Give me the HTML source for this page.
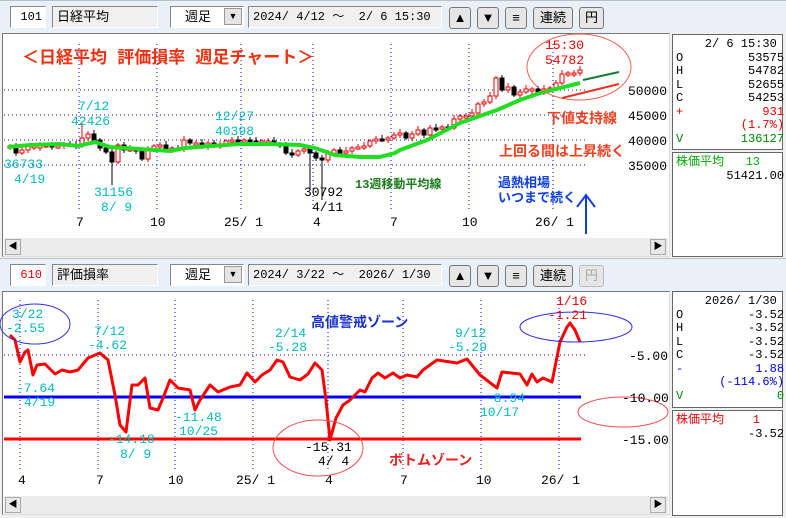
<!DOCTYPE html>
<html><head><meta charset="utf-8">
<style>
*{margin:0;padding:0;box-sizing:border-box}
body{width:786px;height:518px;background:#f0f0f0;position:relative;overflow:hidden;font-family:"Liberation Mono","Noto Sans CJK JP",monospace;font-size:13px}
.tb{position:absolute;left:0;width:786px;height:33px;background:#eaf0f8;border-top:1px solid #b8c0cc}
.box{position:absolute;top:6px;height:22px;background:#f0f0f0;border:1px solid #888;border-right-color:#fff;border-bottom-color:#fff;line-height:20px;padding-left:4px;white-space:pre;font-size:12px}
.btn{position:absolute;top:7px;height:22px;background:#e6e6e6;border:1px solid #777;border-radius:3px;text-align:center;line-height:20px;font-family:"Liberation Sans","Noto Sans CJK JP",sans-serif;font-size:13px}
.panel{position:absolute;background:#fff;border:1px solid #777;border-right-color:#ddd;border-bottom-color:#ddd}
.info{position:absolute;background:#fff;border:1px solid #666;font-size:12px;line-height:13.5px;white-space:pre}
.sb{position:absolute;height:18px;background:#ececec}
.arr{position:absolute;width:16px;height:16px;background:#e8e8e8;border:1px solid #aaa;font-size:9px;text-align:center;line-height:14px}
svg text{font-family:"Liberation Mono","Noto Sans CJK JP",monospace}
</style></head><body>

<div class="tb" style="top:0"></div>
<div class="box" style="left:10px;width:36px;background:#fff;text-align:right;padding-right:3px">101</div>
<div class="box" style="left:52px;width:106px;font-family:'Liberation Sans','Noto Sans CJK JP',sans-serif;font-size:13px">日経平均</div>
<div class="box" style="left:170px;width:74px;background:#fff;font-family:'Liberation Sans','Noto Sans CJK JP',sans-serif;padding-left:14px;font-size:13px">週足<span style="position:absolute;right:1px;top:1px;width:18px;height:17px;background:#e4e4e4;border:1px solid #999;font-size:9px;text-align:center;line-height:15px">▼</span></div>
<div class="box" style="left:248px;width:194px">2024/ 4/12 ～  2/ 6 15:30</div>
<div class="btn" style="left:449px;width:22px">▲</div>
<div class="btn" style="left:477px;width:22px">▼</div>
<div class="btn" style="left:505px;width:22px">≡</div>
<div class="btn" style="left:533px;width:40px">連続</div>
<div class="btn" style="left:579px;width:25px">円</div>

<div class="tb" style="top:258px"></div>
<div class="box" style="top:264px;left:10px;width:36px;background:#fff;text-align:right;padding-right:3px;color:#e00">610</div>
<div class="box" style="top:264px;left:52px;width:106px;font-family:'Liberation Sans','Noto Sans CJK JP',sans-serif;font-size:13px">評価損率</div>
<div class="box" style="top:264px;left:170px;width:74px;background:#fff;font-family:'Liberation Sans','Noto Sans CJK JP',sans-serif;padding-left:14px;font-size:13px">週足<span style="position:absolute;right:1px;top:1px;width:18px;height:17px;background:#e4e4e4;border:1px solid #999;font-size:9px;text-align:center;line-height:15px">▼</span></div>
<div class="box" style="top:264px;left:248px;width:194px">2024/ 3/22 ～  2026/ 1/30</div>
<div class="btn" style="top:265px;left:449px;width:22px">▲</div>
<div class="btn" style="top:265px;left:477px;width:22px">▼</div>
<div class="btn" style="top:265px;left:505px;width:22px">≡</div>
<div class="btn" style="top:265px;left:533px;width:40px">連続</div>
<div class="btn" style="top:265px;left:579px;width:25px;color:#aaa;border-color:#bbb">円</div>

<div class="panel" style="left:2px;top:33px;width:668px;height:224px"></div>
<div class="sb" style="left:4px;top:238px;width:664px"></div>
<div class="arr" style="left:5px;top:239px">◀</div>
<div class="arr" style="left:650px;top:239px">▶</div>
<div class="panel" style="left:2px;top:291px;width:668px;height:224px"></div>
<div class="sb" style="left:4px;top:496px;width:664px"></div>
<div class="arr" style="left:5px;top:497px">◀</div>
<div class="arr" style="left:650px;top:497px">▶</div>

<svg width="786" height="518" style="position:absolute;left:0;top:0" id="sv">
<g stroke="#00f" stroke-width="1" stroke-dasharray="1,3">
<line x1="4" y1="90" x2="585" y2="90"/><line x1="4" y1="115" x2="585" y2="115"/><line x1="4" y1="140" x2="585" y2="140"/><line x1="4" y1="165" x2="585" y2="165"/>
<line x1="79" y1="44" x2="79" y2="210"/><line x1="157" y1="44" x2="157" y2="210"/><line x1="241" y1="44" x2="241" y2="210"/><line x1="313" y1="44" x2="313" y2="210"/><line x1="391" y1="44" x2="391" y2="210"/><line x1="469" y1="44" x2="469" y2="210"/><line x1="553" y1="44" x2="553" y2="210"/>
<line x1="4" y1="355" x2="588" y2="355"/>
<line x1="20" y1="300" x2="20" y2="470"/><line x1="98" y1="300" x2="98" y2="470"/><line x1="175" y1="300" x2="175" y2="470"/><line x1="253" y1="300" x2="253" y2="470"/><line x1="328" y1="300" x2="328" y2="470"/><line x1="403" y1="300" x2="403" y2="470"/><line x1="481" y1="300" x2="481" y2="470"/><line x1="559" y1="300" x2="559" y2="470"/>
</g>
<g id="candles"></g>
<polyline fill="none" stroke="#22dd22" stroke-width="4" points="8,147 30,145 60,144 78,146 95,142 110,147 140,149 170,151 185,148 210,146 240,144 270,144 300,145 315,148 335,155 360,157 380,157 395,153 400,150 427,140 460,123 497,110 520,100 540,93 580,83"/>
<g font-size="13">
<text x="4" y="168" fill="#0bb">36733</text><text x="14" y="183" fill="#0bb">4/19</text>
<text x="78" y="110" fill="#0bb">7/12</text><text x="71" y="125" fill="#0bb">42426</text>
<text x="94" y="196" fill="#0bb">31156</text><text x="101" y="211" fill="#0bb">8/ 9</text>
<text x="215" y="120" fill="#0bb">12/27</text><text x="215" y="135" fill="#0bb">40398</text>
<text x="304" y="196" fill="#000">30792</text><text x="312" y="211" fill="#000">4/11</text>
<text x="545" y="49" fill="#e00">15:30</text><text x="545" y="64" fill="#e00">54782</text>
</g>
<g fill="#000" font-size="13"><text x="76" y="226">7</text><text x="150" y="226">10</text><text x="224" y="226">25/ 1</text><text x="313" y="226">4</text><text x="390" y="226">7</text><text x="462" y="226">10</text><text x="535" y="226">26/ 1</text>
<text x="628" y="95">50000</text><text x="628" y="120">45000</text><text x="628" y="145">40000</text><text x="628" y="170">35000</text></g>
<text x="22" y="63" fill="#f03010" font-size="17" font-weight="bold" font-family="Liberation Sans,Noto Sans CJK JP,sans-serif">＜日経平均  評価損率  週足チャート＞</text>
<text x="547" y="123" fill="#f04020" font-size="14" font-weight="bold" font-family="Liberation Sans,Noto Sans CJK JP,sans-serif">下値支持線</text>
<text x="499" y="156" fill="#f04020" font-size="14" font-weight="bold" font-family="Liberation Sans,Noto Sans CJK JP,sans-serif">上回る間は上昇続く</text>
<text x="355" y="188" fill="#1a7a1a" font-size="12" font-weight="bold" font-family="Liberation Sans,Noto Sans CJK JP,sans-serif">13週移動平均線</text>
<text x="498" y="187" fill="#1040e0" font-size="13" font-weight="bold" font-family="Liberation Sans,Noto Sans CJK JP,sans-serif">過熱相場</text>
<text x="498" y="202" fill="#1040e0" font-size="13" font-weight="bold" font-family="Liberation Sans,Noto Sans CJK JP,sans-serif">いつまで続く</text>
<ellipse cx="579" cy="67" rx="52" ry="33" fill="none" stroke="#f06050" stroke-width="1"/>
<line x1="583" y1="80" x2="619" y2="72" stroke="#1a7a30" stroke-width="2"/>
<line x1="562" y1="98" x2="619" y2="84" stroke="#f03020" stroke-width="2"/>
<line x1="586" y1="195" x2="586" y2="234" stroke="#1040e0" stroke-width="2"/><polyline points="577,207 586,195 595,207" fill="none" stroke="#1040e0" stroke-width="2"/>

<line x1="4" y1="397" x2="581" y2="397" stroke="#00f" stroke-width="3"/>
<line x1="4" y1="439" x2="581" y2="439" stroke="#f00" stroke-width="3"/>
<polyline fill="none" stroke="#f00" stroke-width="3" stroke-linejoin="round" points="10,335 15,340 20,362 25,352 28,350 33,375 37,365 45,364 55,374 62,370 70,372 78,370 88,358 100,353 108,360 115,395 120,425 126,432 132,385 138,385 145,378 150,408 158,410 163,398 170,380 178,388 190,390 195,410 200,400 210,385 218,392 230,387 240,385 247,373 255,382 262,375 270,370 277,360 283,362 290,377 300,380 308,374 315,363 322,370 326,400 330,440 336,418 343,405 350,400 360,390 365,392 372,378 378,373 385,378 393,373 400,378 407,375 417,377 423,370 437,360 457,363 467,359 480,375 497,388 502,372 520,374 527,385 532,374 537,382 543,378 552,382 560,342 567,327 570,323 575,330 580,342"/>
<ellipse cx="35" cy="324" rx="35" ry="20" fill="none" stroke="#3030e0" stroke-width="1"/>
<ellipse cx="576" cy="327" rx="56" ry="15" fill="none" stroke="#3030e0" stroke-width="1"/>
<ellipse cx="318" cy="448" rx="45" ry="28" fill="none" stroke="#f05050" stroke-width="1"/>
<ellipse cx="623" cy="412" rx="45" ry="15" fill="none" stroke="#f05050" stroke-width="1"/>
<g fill="#0bb" font-size="13"><text x="12" y="318">3/22</text><text x="6" y="332">-2.55</text>
<text x="94" y="335">7/12</text><text x="88" y="349">-4.62</text>
<text x="16" y="392">-7.64</text><text x="24" y="406">4/19</text>
<text x="108" y="443">-14.18</text><text x="120" y="458">8/ 9</text>
<text x="175" y="421">-11.48</text><text x="179" y="435">10/25</text>
<text x="275" y="337">2/14</text><text x="268" y="351">-5.28</text>
<text x="455" y="337">9/12</text><text x="448" y="351">-5.29</text>
<text x="486" y="402">-8.94</text><text x="480" y="416">10/17</text></g>
<text x="305" y="451" fill="#000" font-size="13">-15.31</text><text x="318" y="465" fill="#000" font-size="13">4/ 4</text>
<text x="556" y="305" fill="#e00" font-size="13">1/16</text><text x="548" y="319" fill="#e00" font-size="13">-1.21</text>
<text x="311" y="327" fill="#1830d0" font-size="14" font-weight="bold" font-family="Liberation Sans,Noto Sans CJK JP,sans-serif">高値警戒ゾーン</text>
<text x="389" y="465" fill="#f02020" font-size="14" font-weight="bold" font-family="Liberation Sans,Noto Sans CJK JP,sans-serif">ボトムゾーン</text>
<g fill="#000" font-size="13"><text x="18" y="484">4</text><text x="96" y="484">7</text><text x="168" y="484">10</text><text x="236" y="484">25/ 1</text><text x="325" y="484">4</text><text x="400" y="484">7</text><text x="476" y="484">10</text><text x="541" y="484">26/ 1</text>
<text x="629" y="360">-5.00</text><text x="622" y="402">-10.00</text><text x="622" y="444">-15.00</text></g>
</svg>

<div class="info" style="left:672px;top:34px;width:111px;height:116px;padding:3px 2px 0 3px">    2/ 6 15:30
O         53575
H         54782
L         52655
C         54253
<span style="color:#e00">+           931</span>
<span style="color:#e00">         (1.7%)</span>
<span style="color:#080">V        136127</span></div>
<div class="info" style="left:672px;top:152px;width:111px;height:105px;padding:3px 2px 0 3px"><span style="color:#0a0">株価平均   13</span>
       51421.00</div>
<div class="info" style="left:672px;top:291px;width:111px;height:117px;padding:3px 2px 0 3px">    2026/ 1/30
O         -3.52
H         -3.52
L         -3.52
C         -3.52
<span style="color:#00e">-          1.88</span>
<span style="color:#00e">      (-114.6%)</span>
<span style="color:#080">V             0</span></div>
<div class="info" style="left:672px;top:410px;width:111px;height:106px;padding:3px 2px 0 3px"><span style="color:#e00">株価平均    1</span>
          -3.52</div>

<script>
(function(){
var c=[146,153,150,146,146,146,145,147,146,144,145,146,138,134,140,148,152,162,145,150,149,151,159,150,146,145,150,148,149,140,143,143,147,143,146,145,141,140,141,140,141,143,141,141,144,145,153,155,151,149,153,158,160,154,150,153,151,148,147,146,141,139,140,138,135,133,138,134,130,135,128,129,127,128,119,116,116,113,104,102,96,78,90,87,95,92,89,89,92,89,88,83,74,73,73,70];
var g=document.getElementById('candles'),h='',prev=148;
for(var i=0;i<c.length;i++){var x=10+i*6,o=prev,cl=c[i];if(Math.abs(o-cl)<1)o=cl+2;
var t0=Math.min(o,cl),b0=Math.max(o,cl),up=cl<o;
var hi=t0-2-(i%3),lo=b0+2+(i%2);
if(i==17)lo=185;if(i==50)lo=188;if(i==52)lo=200;if(i==12)hi=123;
var col=up?'#e00':'#000';
h+='<line x1="'+x+'" y1="'+hi+'" x2="'+x+'" y2="'+lo+'" stroke="'+col+'" stroke-width="1"/>';
h+='<rect x="'+(x-2)+'" y="'+t0+'" width="4" height="'+Math.max(2,b0-t0)+'" fill="'+(up?'#fff':'#000')+'" stroke="'+col+'" stroke-width="1"/>';
prev=cl;}
g.innerHTML=h;
})();
</script>
</body></html>
